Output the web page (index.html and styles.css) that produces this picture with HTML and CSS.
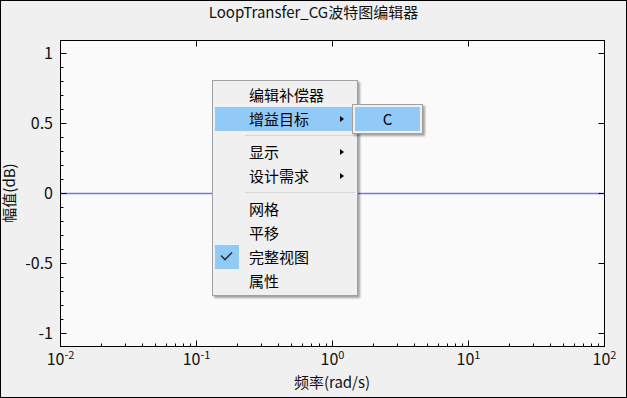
FILE: index.html
```html
<!DOCTYPE html>
<html lang="zh-CN">
<head>
    <meta charset="UTF-8">
    <meta name="viewport" content="width=device-width, initial-scale=1.0">
    <title>LoopTransfer_CG波特图编辑器</title>
    <link rel="stylesheet" href="styles.css">
</head>
<body>
    <div class="window">
        <div class="title">LoopTransfer_CG波特图编辑器</div>
        <svg class="figure" width="625" height="372" viewBox="1 25 625 372">
            <rect class="plot-bg" x="60.5" y="40.5" width="544" height="306"></rect>
            <line class="trace" x1="61" y1="193.5" x2="604" y2="193.5"></line>
            <g id="ticks" class="ticks"></g>
            <rect class="plot-box" x="60.5" y="40.5" width="544" height="306"></rect>
            <g id="labels" class="tick-labels"></g>
            <text class="axis-label" x="332" y="388" text-anchor="middle">频率(rad/s)</text>
            <text class="axis-label" transform="translate(15,193) rotate(-90)" text-anchor="middle">幅值(dB)</text>
        </svg>

        <div class="menu">
            <div class="menu-item">编辑补偿器</div>
            <div class="menu-item active">增益目标<span class="arrow"></span></div>
            <div class="menu-sep"></div>
            <div class="menu-item">显示<span class="arrow"></span></div>
            <div class="menu-item">设计需求<span class="arrow"></span></div>
            <div class="menu-sep"></div>
            <div class="menu-item">网格</div>
            <div class="menu-item">平移</div>
            <div class="menu-item">
                <span class="check">
                    <svg width="24" height="24" viewBox="0 0 24 24"><path d="M6 10.5 L10 14.5 L17 7.5" fill="none" stroke="#333" stroke-width="1.6"/></svg>
                </span>
                完整视图
            </div>
            <div class="menu-item">属性</div>
        </div>

        <div class="submenu">
            <div class="submenu-item">C</div>
        </div>
    </div>

    <script>
        const svgNS = 'http://www.w3.org/2000/svg';
        const ticks = document.getElementById('ticks');
        const labels = document.getElementById('labels');

        // Axes box in page pixels
        const axLeft = 60.5, axRight = 604.5, axTop = 40.5, axBottom = 346.5;
        const decade = 136;

        function yOf(v) {
            return 193.5 - 140 * v;
        }

        function snap(x) {
            return Math.round(x - 0.5) + 0.5;
        }

        function addLine(x1, y1, x2, y2) {
            const l = document.createElementNS(svgNS, 'line');
            l.setAttribute('x1', x1);
            l.setAttribute('y1', y1);
            l.setAttribute('x2', x2);
            l.setAttribute('y2', y2);
            ticks.appendChild(l);
        }

        // Log frequency axis, 10^-2 .. 10^2
        for (let d = 0; d < 4; d++) {
            for (let k = 1; k < 10; k++) {
                if (d === 0 && k === 1) continue;
                const x = snap(axLeft + decade * (d + Math.log10(k)));
                const len = k === 1 ? 6 : 3;
                addLine(x, axBottom, x, axBottom - len);
                if (k === 1) addLine(x, axTop, x, axTop + len);
            }
        }

        for (let d = 0; d <= 4; d++) {
            const t = document.createElementNS(svgNS, 'text');
            t.setAttribute('x', axLeft + decade * d);
            t.setAttribute('y', 365);
            t.setAttribute('text-anchor', 'middle');
            t.textContent = '10';
            const sup = document.createElementNS(svgNS, 'tspan');
            sup.setAttribute('class', 'sup');
            sup.setAttribute('dy', '-6');
            sup.textContent = String(d - 2);
            t.appendChild(sup);
            labels.appendChild(t);
        }

        // Magnitude axis, -1 .. 1
        for (let i = -10; i <= 10; i++) {
            const y = yOf(i / 10);
            const major = i % 5 === 0;
            addLine(axLeft, y, axLeft + (major ? 6 : 3), y);
            if (major) {
                addLine(axRight, y, axRight - 6, y);
                const t = document.createElementNS(svgNS, 'text');
                t.setAttribute('x', 53);
                t.setAttribute('y', y + 5.5);
                t.setAttribute('text-anchor', 'end');
                t.textContent = String(i / 10);
                labels.appendChild(t);
            }
        }
    </script>
</body>
</html>
```

FILE: styles.css
```css
* {
    box-sizing: border-box;
}
body {
    margin: 0;
    font-family: "Noto Sans CJK SC", "Noto Sans", sans-serif;
    font-size: 15px;
    color: #000;
}
.window {
    position: relative;
    width: 627px;
    height: 398px;
    border: 1px solid #000;
    background: #f0f0f0;
    display: flex;
    flex-direction: column;
    overflow: hidden;
}
.title {
    height: 24px;
    line-height: 22px;
    text-align: center;
    color: #111;
}
.figure {
    display: block;
}
.plot-bg {
    fill: #fafafa;
}
.plot-box {
    fill: none;
    stroke: #000;
    stroke-width: 1;
}
.trace {
    stroke: #7474f6;
    stroke-width: 1.7;
}
.ticks line {
    stroke: #000;
    stroke-width: 1;
}
.tick-labels text {
    font-family: "Noto Sans CJK SC", "Noto Sans", sans-serif;
    font-size: 16px;
    fill: #111;
}
.axis-label {
    font-family: "Noto Sans CJK SC", "Noto Sans", sans-serif;
    font-size: 15px;
    fill: #111;
}
.tick-labels .sup {
    font-size: 11px;
}

/* context menu */
.menu {
    position: absolute;
    left: 211px;
    top: 79px;
    width: 146px;
    height: 216px;
    background: #f0f0f0;
    border: 1px solid #a0a0a0;
    box-shadow: 2px 2px 2px rgba(0, 0, 0, 0.35);
    padding: 2px 0;
}
.menu-item {
    position: relative;
    display: flex;
    align-items: center;
    height: 24px;
    margin: 0 2px;
    padding-left: 34px;
    line-height: 24px;
}
.menu-item.active {
    background: #91c9f7;
}
.arrow {
    margin-left: auto;
    margin-right: 11px;
    width: 0;
    height: 0;
    border-top: 3.5px solid transparent;
    border-bottom: 3.5px solid transparent;
    border-left: 4px solid #000;
}
.menu-sep {
    height: 1px;
    margin: 4px 2px 4px 32px;
    background: #d7d7d7;
}
.check {
    position: absolute;
    left: 0;
    top: 0;
    width: 24px;
    height: 24px;
    background: #91c9f7;
}
.check svg {
    display: block;
}

.submenu {
    position: absolute;
    left: 351px;
    top: 103px;
    width: 71px;
    height: 30px;
    background: #f0f0f0;
    border: 1px solid #a0a0a0;
    box-shadow: 2px 2px 2px rgba(0, 0, 0, 0.35);
    padding: 2px;
}
.submenu-item {
    height: 24px;
    line-height: 24px;
    background: #91c9f7;
    text-align: center;
}
```
